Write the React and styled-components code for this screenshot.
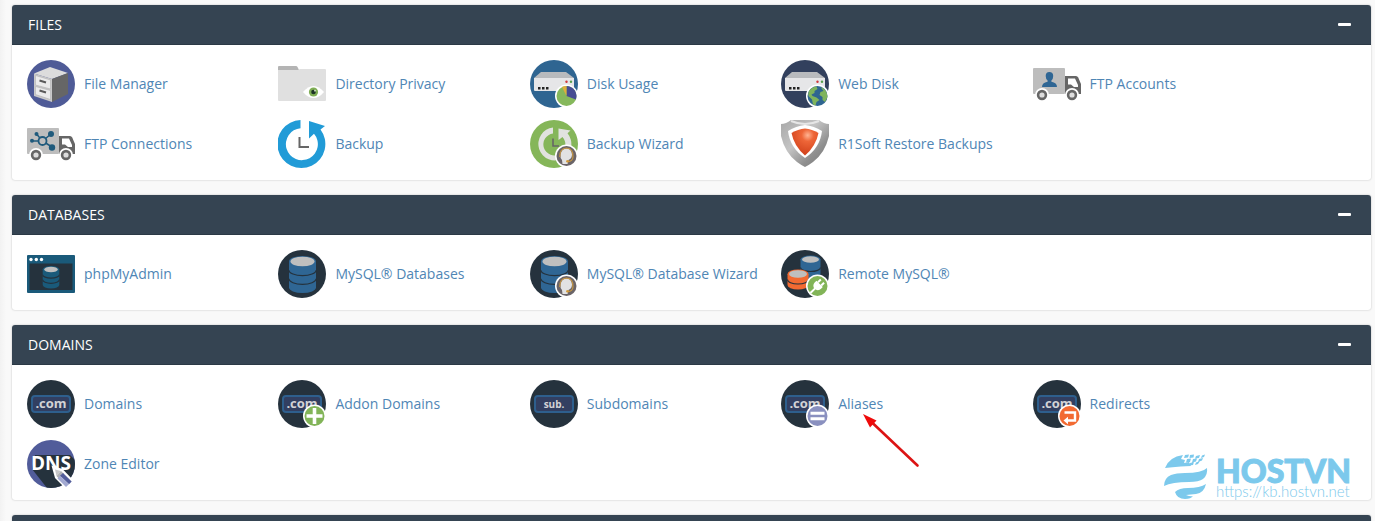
import React, { useState } from "react";
import styled, { createGlobalStyle } from "styled-components";

const GlobalStyle = createGlobalStyle`
  * { box-sizing: border-box; }
  body {
    margin: 0;
    background: #f9f9f9;
    font-family: "Open Sans", "Noto Sans", sans-serif;
    font-size: 14px;
    line-height: 20px;
  }
`;

const Page = styled.main`
  display: flex;
  flex-direction: column;
  gap: 15px;
  height: 100vh;
  overflow: hidden;
  padding: 5px 4px 0 12px;
  background: linear-gradient(to right, #f2f2f2, #f9f9f9 6px);
`;

const Panel = styled.section`
  position: relative;
  flex: none;
  background: #fff;
  border-radius: 3px;
  box-shadow: 0 0 2px rgba(0, 0, 0, 0.25);
`;

const PanelHeader = styled.header`
  display: flex;
  align-items: center;
  justify-content: space-between;
  height: 40px;
  padding: 0 20px 0 16px;
  background: #354452;
  border-bottom: 1px solid #2b3945;
  border-radius: 3px 3px 0 0;
`;

const PanelTitle = styled.h2`
  margin: 0;
  color: #fff;
  font-size: 14px;
  font-weight: 400;
  text-transform: uppercase;
`;

const CollapseButton = styled.button`
  display: flex;
  padding: 8px 0;
  border: 0;
  background: none;
  cursor: pointer;

  &::before {
    content: "";
    width: 13px;
    height: 3px;
    border-radius: 1px;
    background: #fff;
  }
`;

const ItemGrid = styled.ul`
  display: grid;
  grid-template-columns: repeat(5, minmax(0, 1fr));
  gap: 12px 0;
  margin: 0;
  padding: 15px 87px 12px 15px;
  list-style: none;
`;

const Item = styled.li`
  position: relative;
`;

const ItemLink = styled.a`
  display: flex;
  align-items: center;
  gap: 9px;
  color: #4f86b5;
  text-decoration: none;
  white-space: nowrap;
`;

const Icon = styled.svg`
  flex: none;
  width: 48px;
  height: 48px;
`;

const Arrow = styled.svg`
  position: absolute;
  left: 81px;
  top: 33px;
  width: 60px;
  height: 56px;
  pointer-events: none;
`;

const Watermark = styled.div`
  position: absolute;
  right: 21px;
  bottom: 0;
  display: flex;
  align-items: flex-end;
  gap: 8px;
  color: #7cc9ec;
`;

const WatermarkText = styled.div`
  display: flex;
  flex-direction: column;
  width: 134px;
  font-family: Lato, sans-serif;
`;

const Brand = styled.strong`
  font-size: 32px;
  font-weight: 900;
  line-height: 24px;
  -webkit-text-stroke: 1px currentColor;
`;

const BrandUrl = styled.span`
  font-size: 15px;
  font-weight: 300;
  line-height: 17px;
`;

const DARK = "#25323d";
const BLUE = "#2f6694";

const Disc = ({ fill = DARK }) => <circle cx="24" cy="24" r="24" fill={fill} />;

const Truck = ({ children }) => (
  <Icon viewBox="0 0 48 48" aria-hidden="true">
    <rect y="8" width="32" height="26" rx="1" fill="#bdbdbd" />
    <path d="M32 16h11q1.500 0 2.200 1.500L48 24v10H32z" fill="#666" />
    <path d="M35 18.500h7l3 6.500v2h-4l-3-2.500h-3z" fill="#fff" />
    {children}
    {[9, 39].map((x) => (
      <g key={x}>
        <circle cx={x} cy="35" r="7" fill="#fff" />
        <circle cx={x} cy="35" r="3.900" fill="#ddd" stroke="#666" strokeWidth="2.600" />
      </g>
    ))}
  </Icon>
);

const Badge = ({ fill, children }) => (
  <g transform="translate(36.500 36)">
    <circle r="11.500" fill="#fff" />
    <circle r="10" fill={fill} />
    {children}
  </g>
);

const WizardBadge = () => (
  <Badge fill="#6a6468">
    <path d="M-6-1.500Q-5-7.500 0-7.500t5.500 6q0 4-3.500 5.500l-1 4h-5l-.500-4Q-6.500 2-6-1.500z" fill="#e2e2e2" />
    <path d="M-6.800 1Q-7-7.500 0-8 7-7.500 6.500 1q-.500 5-6 4.500" fill="none" stroke="#c49544" strokeWidth="1.200" />
    <circle cx="1" cy="5.300" r="1.300" fill="#d29a3a" />
  </Badge>
);

const Drive = () => (
  <>
    <path d="M11 12h25l8 6H4z" fill="#b8babd" />
    <path d="M4 18h40v12q0 1-1 1H5q-1 0-1-1z" fill="#e6e6e8" />
    <path d="M8 27h2.500v2.500H8zM12 27h2.500v2.500H12zM16 27h2.500v2.500H16z" fill="#222" />
    <circle cx="36.500" cy="21.700" r="1.200" fill="#d0383b" />
    <circle cx="41" cy="21.700" r="1.200" fill="#58a04c" />
  </>
);

const Cylinder = ({ x, y, rx, ry, h, fill = BLUE, bands = [1 / 3, 2 / 3] }) => (
  <g>
    <path d={`M${x - rx} ${y}v${h}a${rx} ${ry} 0 0 0 ${rx * 2} 0v${-h}z`} fill={fill} />
    {bands.map((n) => (
      <path
        key={n}
        d={`M${x - rx} ${y + h * n}a${rx} ${ry} 0 0 0 ${rx * 2} 0`}
        fill="none"
        stroke={DARK}
        strokeWidth="1.200"
      />
    ))}
    <ellipse cx={x} cy={y} rx={rx} ry={ry} fill={fill} />
    <ellipse cx={x} cy={y} rx={rx - 1.5} ry={ry - 0.7} fill="#bfbfbf" />
  </g>
);

const DomainBox = ({ label = ".com", size = 13, children }) => (
  <Icon viewBox="0 0 48 48" aria-hidden="true">
    <Disc />
    <rect x="5" y="16" width="38" height="16" rx="3" fill="#323f61" stroke="#2e5f8d" strokeWidth="2" />
    <text x="24" y="28" fill="#d3d3d6" fontSize={size} fontWeight="700" textAnchor="middle">
      {label}
    </text>
    {children}
  </Icon>
);

const icons = {
  fileManager: (
    <Icon viewBox="0 0 48 48" aria-hidden="true">
      <Disc fill="#4f5b97" />
      <path d="M7 13.500 23 7l18 6-16 6z" fill="#dcdcdc" />
      <path d="M7 13.500 25 19v23L7 36z" fill="#c9c9c9" />
      <path d="M25 19l16-6v21l-16 8z" fill="#666" />
      <path d="M8.500 15.500l15 4.500v9l-15-4zM8.500 26.500l15 4v9l-15-5z" fill="#ebebeb" stroke="#aaa" strokeWidth=".5" />
      <path d="M12.500 20.500l6.500 2M12.500 30.500l6.500 2" stroke="#5a5a5a" strokeWidth="2" />
    </Icon>
  ),
  directoryPrivacy: (
    <Icon viewBox="0 0 48 48" aria-hidden="true">
      <path d="M0 7q0-1 1-1h17q1 0 1.500 1l2 4H0z" fill="#b4b4b4" />
      <path d="M0 10h20l2-1h25q1 0 1 1v30q0 1-1 1H1q-1 0-1-1z" fill="#e0e0e0" />
      <path d="M25 32q5-6 10.500-6T46 32q-5 6-10.500 6T25 32z" fill="#fff" />
      <circle cx="35.500" cy="32" r="4.600" fill="#7fae55" />
      <circle cx="35.500" cy="32" r="2.300" fill="#1d3327" />
      <circle cx="37" cy="30.700" r=".9" fill="#dbe9ce" />
    </Icon>
  ),
  diskUsage: (
    <Icon viewBox="0 0 48 48" aria-hidden="true">
      <Disc fill="#2f6591" />
      <Drive />
      <Badge fill="#86b85c">
        <path d="M0 0v-10a10 10 0 0 1 9.400 13.400z" fill="#464c92" />
        <path d="M0 0l-4.500-9A10 10 0 0 1 0-10z" fill="#dfae3d" />
      </Badge>
    </Icon>
  ),
  webDisk: (
    <Icon viewBox="0 0 48 48" aria-hidden="true">
      <Disc fill="#32405d" />
      <Drive />
      <Badge fill="#2f6591">
        <path d="M-8.500-5Q-5-9.500-1-9.500L0-7l-3 2 0 2-3 1.500 1 1.500 4 1.500L2 4l-3 2-1 3.500-2.500-1-1-5L-9 0q-.500-2.500.500-5zM3-9q5.500 2 6.500 7L10 1 7.500 6 5 4V1L2-1l1-3 3-1z" fill="#7fb45c" />
      </Badge>
    </Icon>
  ),
  ftpAccounts: (
    <Truck>
      <path d="M16.300 12q3.900 0 3.900 4 0 3-1.800 4.400v1.300q5.600 1 5.600 5.300H9q0-4.300 5.600-5.300v-1.300q-1.900-1.400-1.900-4.400 0-4 3.600-4z" fill="#2f6694" />
    </Truck>
  ),
  ftpConnections: (
    <Truck>
      <g fill="#1f5a7c" stroke="#1f5a7c">
        <path d="M15.500 21H5M15.500 21l-6-7M15.500 21l8.500-7M15.500 21l9.500 6" strokeWidth="1.500" />
        <circle cx="15.500" cy="21" r="4" fill="#bdbdbd" strokeWidth="1.800" />
        <g stroke="none">
          <circle cx="5" cy="20.700" r="2" />
          <circle cx="9.500" cy="14" r="2" />
          <circle cx="24" cy="14" r="3" />
          <circle cx="25" cy="27.500" r="3.200" />
        </g>
      </g>
    </Truck>
  ),
  backup: (
    <Icon viewBox="0 0 48 48" aria-hidden="true">
      <path d="M22.500 0v8.200A16 16 0 1 0 36 13.700l-5 4.800V1l16 5-4.500 3.500A24 24 0 1 1 22.500 0z" fill="#219bd7" />
      <path d="M21.500 17v10H31" fill="none" stroke="#666" strokeWidth="2" />
    </Icon>
  ),
  backupWizard: (
    <Icon viewBox="0 0 48 48" aria-hidden="true">
      <Disc fill="#85b659" />
      <path d="M23 7.500v6A11 11 0 1 0 32.500 17L28.500 20V8.500l12 2-3 2.800A16.500 16.500 0 1 1 23 7.500z" fill="#e1e2df" />
      <path d="M23 18.500V26h6" fill="none" stroke="#666" strokeWidth="1.600" />
      <WizardBadge />
    </Icon>
  ),
  r1soft: (
    <Icon viewBox="0 0 48 48" aria-hidden="true">
      <defs>
        <linearGradient id="steel" x1="0" y1="0" x2="1" y2="1">
          <stop offset="0" stopColor="#a8a8a8" />
          <stop offset=".4" stopColor="#c4c4c4" />
          <stop offset=".7" stopColor="#8f8f8f" />
          <stop offset="1" stopColor="#777" />
        </linearGradient>
        <radialGradient id="ember" cx=".6" cy=".25" r=".75">
          <stop offset="0" stopColor="#ffb493" />
          <stop offset=".3" stopColor="#ee6638" />
          <stop offset="1" stopColor="#d0401a" />
        </radialGradient>
      </defs>
      <path d="M0 4Q5 4 10 0h28q5 4 10 4v12q-4 17-16 26-4 3-8 5-4-2-8-5Q4 33 0 16z" fill="url(#steel)" />
      <path d="M10 1q14 6 28 0" fill="none" stroke="#e6e6e6" strokeWidth="2" />
      <path d="M24 5q9 1 17 6-2 17-17 27Q9 28 7 11q8-5 17-6z" fill="#fff" />
      <path d="M24 8.500q7 .500 13.500 4.500Q35 26 24 35.500 13 26 10.500 13q6.500-4 13.500-4.500z" fill="url(#ember)" />
    </Icon>
  ),
  phpMyAdmin: (
    <Icon viewBox="0 0 48 48" aria-hidden="true">
      <rect y="5" width="48" height="38" rx="1" fill="#1a5a7a" />
      <rect x="2.500" y="13.500" width="43" height="26.500" fill={DARK} />
      {[4, 9.300, 14.500].map((x) => (
        <circle key={x} cx={x} cy="9.500" r="1.700" fill="#fff" />
      ))}
      <Cylinder x={24} y={19.500} rx={8.300} ry={3.500} h={15.500} fill="#1a5a7a" />
    </Icon>
  ),
  mysql: (
    <Icon viewBox="0 0 48 48" aria-hidden="true">
      <Disc />
      <Cylinder x={24.5} y={11.500} rx={13.5} ry={5.500} h={26} />
    </Icon>
  ),
  mysqlWizard: (
    <Icon viewBox="0 0 48 48" aria-hidden="true">
      <Disc />
      <Cylinder x={24.5} y={11.500} rx={13.5} ry={5.500} h={26} />
      <WizardBadge />
    </Icon>
  ),
  remoteMysql: (
    <Icon viewBox="0 0 48 48" aria-hidden="true">
      <Disc />
      <Cylinder x={29.5} y={9.500} rx={10} ry={4} h={16} bands={[0.5]} />
      <Cylinder x={17} y={24} rx={10.5} ry={4.5} h={11} fill="#f26a32" bands={[0.5]} />
      <Badge fill="#82b458">
        <g transform="rotate(45)" fill="#fff">
          <path d="M-4.500-3h9v2.500a4.500 4.500 0 0 1-9 0z" />
          <path d="M-3.300-7h2v4h-2zM1.300-7h2v4h-2zM-1 3h2v7h-2z" />
        </g>
      </Badge>
    </Icon>
  ),
  domains: <DomainBox />,
  addonDomains: (
    <DomainBox>
      <Badge fill="#82b458">
        <path d="M0-8V8M-8 0H8" stroke="#fff" strokeWidth="3.600" />
      </Badge>
    </DomainBox>
  ),
  subdomains: <DomainBox label="sub." size={10} />,
  aliases: (
    <DomainBox>
      <Badge fill="#8a90bf">
        <path d="M-7-2.700H7M-7 2.700H7" stroke="#fff" strokeWidth="3" />
      </Badge>
    </DomainBox>
  ),
  redirects: (
    <DomainBox>
      <Badge fill="#f26a32">
        <path d="M-5-3.500H5.500V4.500H-2" fill="none" stroke="#fff" strokeWidth="2.400" />
        <path d="M-6 4.500l4.500-3.700v7.400z" fill="#fff" />
      </Badge>
    </DomainBox>
  ),
  zoneEditor: (
    <Icon viewBox="0 0 48 48" aria-hidden="true">
      <clipPath id="dns-disc">
        <circle cx="24" cy="24" r="24" />
      </clipPath>
      <Disc fill="#515c9a" />
      <path d="M5 29l15 19h28V20l-5-5H8z" fill={DARK} clipPath="url(#dns-disc)" />
      <text x="24" y="30" fill="#fff" fontSize="19" fontWeight="700" textAnchor="middle">
        DNS
      </text>
      <path d="M24.500 25.500l11 3.500L47 41l-8 8-11-11z" fill="#fff" />
      <path d="M28 29.500l6 1.500-4.500 5z" fill="#c6c6c8" />
      <path d="M34 31l3.300 3.300-5 5-2.800-3.300z" fill="#aeb0b5" />
      <path d="M36 33l8.700 8.500-2.700 2.800-9-8.500z" fill="#525d9b" />
      <path d="M33 35.800l9 8.500-3 2.700-8.500-8.500z" fill="#a3aad2" />
    </Icon>
  ),
};

const panels = [
  {
    title: "Files",
    items: [
      ["File Manager", "fileManager"],
      ["Directory Privacy", "directoryPrivacy"],
      ["Disk Usage", "diskUsage"],
      ["Web Disk", "webDisk"],
      ["FTP Accounts", "ftpAccounts"],
      ["FTP Connections", "ftpConnections"],
      ["Backup", "backup"],
      ["Backup Wizard", "backupWizard"],
      ["R1Soft Restore Backups", "r1soft"],
    ],
  },
  {
    title: "Databases",
    items: [
      ["phpMyAdmin", "phpMyAdmin"],
      ["MySQL® Databases", "mysql"],
      ["MySQL® Database Wizard", "mysqlWizard"],
      ["Remote MySQL®", "remoteMysql"],
    ],
  },
  {
    title: "Domains",
    branded: true,
    items: [
      ["Domains", "domains"],
      ["Addon Domains", "addonDomains"],
      ["Subdomains", "subdomains"],
      ["Aliases", "aliases"],
      ["Redirects", "redirects"],
      ["Zone Editor", "zoneEditor"],
    ],
  },
];

const Pointer = () => (
  <Arrow viewBox="0 0 60 56" aria-hidden="true">
    <path d="M10 9.500l45.500 43" stroke="#dc1414" strokeWidth="2.600" strokeLinecap="round" />
    <path d="M1 1l13.500 6.500-6.500 7z" fill="#ee0a0a" />
  </Arrow>
);

const BrandMark = () => (
  <svg width="44" height="46" viewBox="0 0 44 46" fill="currentColor" aria-hidden="true">
    <path d="M1 14Q5 3 19 1l-2 4 4 1-1 3 5-1 2 4q-5 0-10 .500-9 .500-16 1.500z" />
    <path d="M21 1l4-.5-1 3-4 .5zM26 1l4-.5-.5 3-4 .5zM32 2l4-1-1 3-4 .5zM38 1.500l3-1-1 2.500-3 1zM23 5l4-.5-1 3.500-4 .5zM29 5l4-.5-1 3-4 1zM35 5l4-1-1 2.500-4 1.500zM26 9l4-1-1 3-4 .5zM32 8.500l4-1.500-2 3-3 1z" />
    <path d="M0 32q0-8 7-11 5-2 14-2 17 0 22-5 1 7-4 11-4 3-14 3-17 0-25 4z" />
    <path d="M11 38q4-4 13-4 12 0 18-4-2 9-10 10l-10 1q5 2 7 1-2 3-8 3-8 0-10-7z" />
  </svg>
);

function FeaturePanel({ title, items, branded }) {
  const [open, setOpen] = useState(true);
  return (
    <Panel>
      <PanelHeader>
        <PanelTitle>{title}</PanelTitle>
        <CollapseButton type="button" aria-expanded={open} aria-label={title} onClick={() => setOpen(!open)} />
      </PanelHeader>
      {open && (
        <ItemGrid>
          {items.map(([label, icon]) => (
            <Item key={label}>
              <ItemLink href={`#${icon}`}>
                {icons[icon]}
                {label}
              </ItemLink>
              {icon === "aliases" && <Pointer />}
            </Item>
          ))}
        </ItemGrid>
      )}
      {branded && (
        <Watermark>
          <BrandMark />
          <WatermarkText>
            <Brand>HOSTVN</Brand>
            <BrandUrl>https://kb.hostvn.net</BrandUrl>
          </WatermarkText>
        </Watermark>
      )}
    </Panel>
  );
}

export default function App() {
  return (
    <>
      <GlobalStyle />
      <Page>
        {panels.map((panel) => (
          <FeaturePanel key={panel.title} {...panel} />
        ))}
        <Panel>
          <PanelHeader />
        </Panel>
      </Page>
    </>
  );
}
